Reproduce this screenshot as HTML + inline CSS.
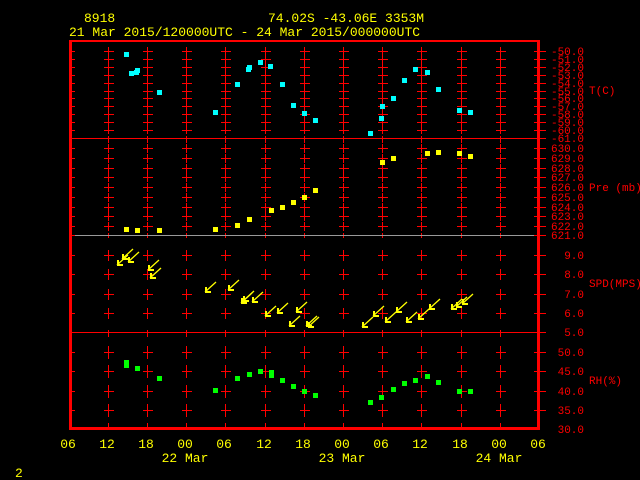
<!DOCTYPE html>
<html><head><meta charset="utf-8"><style>
html,body{margin:0;padding:0;background:#000;width:640px;height:480px;overflow:hidden}
svg{display:block}
text{font-family:"Liberation Mono",monospace}
.y{fill:#ffff00;font-size:13px}
.r{fill:#ff0000;font-size:11px}
.b{fill:#ffff00;font-size:13px}
</style></head><body>
<svg id="s" width="640" height="480" viewBox="0 0 640 480" shape-rendering="crispEdges">
<text class="y" x="84" y="22">8918</text>
<text class="y" x="268" y="22">74.02S  -43.06E  3353M</text>
<text class="y" x="69" y="36">21 Mar 2015/120000UTC - 24 Mar 2015/000000UTC</text>
<g class="r" text-anchor="end">
<text x="584" y="55">-50.0</text><text x="584" y="63">-51.0</text><text x="584" y="71">-52.0</text><text x="584" y="79">-53.0</text><text x="584" y="87">-54.0</text><text x="584" y="95">-55.0</text><text x="584" y="102">-56.0</text><text x="584" y="110">-57.0</text><text x="584" y="118">-58.0</text><text x="584" y="126">-59.0</text><text x="584" y="134">-60.0</text><text x="584" y="142">-61.0</text>
<text x="584" y="152">630.0</text><text x="584" y="162">629.0</text><text x="584" y="172">628.0</text><text x="584" y="181">627.0</text><text x="584" y="191">626.0</text><text x="584" y="201">625.0</text><text x="584" y="211">624.0</text><text x="584" y="220">623.0</text><text x="584" y="230">622.0</text><text x="584" y="239">621.0</text>
<text x="584" y="259">9.0</text><text x="584" y="278">8.0</text><text x="584" y="298">7.0</text><text x="584" y="317">6.0</text><text x="584" y="336">5.0</text>
<text x="584" y="356">50.0</text><text x="584" y="375">45.0</text><text x="584" y="395">40.0</text><text x="584" y="414">35.0</text><text x="584" y="433">30.0</text>
</g>
<g class="r">
<text x="589" y="94">T(C)</text><text x="589" y="191">Pre (mb)</text><text x="589" y="287">SPD(MPS)</text><text x="589" y="384">RH(%)</text>
</g>
<g class="b" text-anchor="middle">
<text x="68" y="448">06</text><text x="107" y="448">12</text><text x="146" y="448">18</text><text x="185" y="448">00</text><text x="224" y="448">06</text><text x="264" y="448">12</text><text x="303" y="448">18</text><text x="342" y="448">00</text><text x="381" y="448">06</text><text x="420" y="448">12</text><text x="460" y="448">18</text><text x="499" y="448">00</text><text x="538" y="448">06</text>
<text x="185" y="462">22 Mar</text><text x="342" y="462">23 Mar</text><text x="499" y="462">24 Mar</text>
</g>
<text class="b" x="15" y="477">2</text>
<g id="g"></g>
</svg>
<script>
var g=document.getElementById('g'),h='';
function R(x,y,w,hh,c){h+='<rect x="'+x+'" y="'+y+'" width="'+w+'" height="'+hh+'" fill="'+(c||'#f00')+'"/>';}
function V(x,y1,y2,c){R(x,y1,1,y2-y1+1,c);}
function H(x1,x2,y,c){R(x1,y,x2-x1+1,1,c);}
var cols=[108,147,186,225,265,304,343,382,421,461,500];
var tRows=[51,59,67,75,83,91,98,106,114,122,130];
var pRows=[148,158,168,177,187,197,207,216,226];
var sRows=[255,274,294,313];
var hRows=[352,371,391,410];
cols.forEach(function(x){
 tRows.forEach(function(y){V(x,y-4,y+3);H(x-4,x+5,y);});
 pRows.forEach(function(y){V(x,y-4,y+4);H(x-4,x+5,y);});
 sRows.forEach(function(y){V(x,y-5,y+5);H(x-4,x+5,y);});
 hRows.forEach(function(y){V(x,y-6,y+6);H(x-4,x+5,y);});
 V(x,330,336);V(x,136,142);V(x,233,237);V(x,423,428);
});
R(69,40,3,390);R(537,40,3,390);R(69,40,471,2);R(69,427,471,3);
H(70,540,138);H(70,540,235,'#999');H(70,540,332);
var all=tRows.concat([138]).concat(pRows).concat([235]).concat(sRows).concat([332]).concat(hRows);
all.forEach(function(y){H(534,545,y);H(70,74,y);});
[[126,54],[131,73],[137,70],[136,72],[159,92],[215,112],[237,84],[248,69],[249,67],[260,62],[270,66],[282,84],[293,105],[304,113],[315,120],[370,133],[381,118],[382,106],[393,98],[404,80],[415,69],[427,72],[438,89],[459,110],[470,112]].forEach(function(p){R(p[0]-2,p[1]-2,5,5,'#00ffff');});
[[126,229],[137,230],[159,230],[215,229],[237,225],[249,219],[271,210],[282,207],[293,202],[304,197],[315,190],[382,162],[393,158],[427,153],[438,152],[459,153],[470,156]].forEach(function(p){R(p[0]-2,p[1]-2,5,5,'#ffff00');});
[[126,363],[126,366],[137,369],[159,379],[215,391],[237,379],[249,375],[260,372],[271,373],[271,376],[282,381],[293,387],[304,392],[315,396],[370,403],[381,398],[393,390],[404,384],[415,381],[427,377],[438,383],[459,392],[470,392]].forEach(function(p){R(p[0]-2,p[1]-3,5,5,'#00ff00');});
[[117,265],[122,259],[128,262],[148,270],[150,278],[205,292],[228,290],[241,303],[243,301],[252,302],[265,316],[277,313],[289,326],[296,312],[306,326],[308,327],[362,327],[373,316],[385,322],[396,312],[406,322],[418,319],[429,309],[451,309],[456,307],[462,304]].forEach(function(p){
 var x=p[0],y=p[1];
 h+='<line x1="'+x+'" y1="'+y+'" x2="'+(x+11)+'" y2="'+(y-10)+'" stroke="#ff0" stroke-width="1.3" shape-rendering="auto"/>';
 R(x,y-5,2,6,'#ff0');R(x,y-1,6,2,'#ff0');
});
g.innerHTML=h;
</script>
</body></html>
